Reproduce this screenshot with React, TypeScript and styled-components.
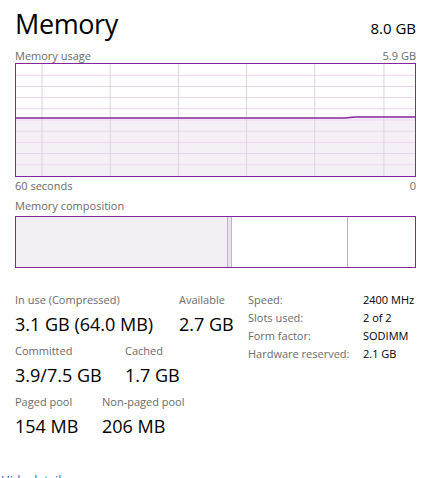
import React from "react";
import styled, { createGlobalStyle } from "styled-components";

const Global = createGlobalStyle`
  html, body { margin: 0; padding: 0; background: #fff; overflow: hidden; }
  body { font-family: "Open Sans", "Noto Sans", sans-serif; color: #000; }
`;

const Page = styled.div`
  width: 432px;
  height: 478px;
  box-sizing: border-box;
  padding: 8px 16px 0 15px;
  display: flex;
  flex-direction: column;
`;

const Header = styled.div`
  display: flex;
  justify-content: space-between;
  align-items: baseline;
  height: 40px;
`;

const Title = styled.div`
  font-size: 27px;
  line-height: 32px;
  letter-spacing: -0.4px;
`;

const Total = styled.div`
  font-size: 15px;
  line-height: 20px;
`;

const CaptionRow = styled.div<{ $h?: number }>`
  display: flex;
  justify-content: space-between;
  font-size: 11px;
  line-height: 15px;
  color: #6b6b6b;
  height: ${(p) => p.$h ?? 15}px;
`;

const GraphBox = styled.div`
  width: 401px;
  height: 114px;
  box-sizing: border-box;
  border: 1.5px solid #85269f;
  background: #fff;
`;

const GraphSvg = styled.svg`
  display: block;
  width: 100%;
  height: 100%;
`;

const CompBox = styled.div`
  width: 401px;
  height: 52px;
  box-sizing: border-box;
  border: 1.5px solid #85269f;
  display: flex;
`;

const Seg = styled.div<{ $w: number; $bg: string; $last?: boolean }>`
  width: ${(p) => p.$w}px;
  flex: ${(p) => (p.$last ? "1" : "none")};
  background: ${(p) => p.$bg};
  border-right: ${(p) => (p.$last ? "none" : "1px solid #c6acd0")};
`;

const Stats = styled.div`
  display: flex;
  align-items: flex-start;
  margin-top: 24px;
`;

const LeftStats = styled.div`
  width: 233px;
  display: flex;
  flex-direction: column;
  gap: 7px;
`;

const StatRow = styled.div`
  display: flex;
`;

const StatCol = styled.div<{ $w?: number }>`
  width: ${(p) => (p.$w ? `${p.$w}px` : "auto")};
  display: flex;
  flex-direction: column;
`;

const StatLabel = styled.div`
  font-size: 11px;
  line-height: 15px;
  color: #6b6b6b;
  height: 20px;
`;

const StatValue = styled.div`
  font-size: 18px;
  line-height: 24px;
  white-space: nowrap;
`;

const Table = styled.div`
  display: grid;
  grid-template-columns: 115px auto;
  align-content: start;
  row-gap: 3px;
  font-size: 11px;
  line-height: 15px;
`;

const TLabel = styled.div`
  color: #6b6b6b;
`;

const TValue = styled.div`
  color: #000;
`;

const Footer = styled.div`
  margin-top: auto;
  margin-left: -14px;
  font-size: 12px;
  line-height: 16px;
  color: #1a5fb4;
  height: 5px;
  overflow: visible;
`;

const W = 398;
const H = 111;

function Graph() {
  const hLines = Array.from({ length: 9 }, (_, i) => ((i + 1) * H) / 10);
  const vLines = [26, 94, 162, 230, 298, 367];
  const yLine = 53.5;
  const yLine2 = 52.5;
  const path = `M0 ${yLine} L328 ${yLine} L338 ${yLine2} L${W} ${yLine2}`;
  const fill = `${path} L${W} ${H} L0 ${H} Z`;
  return (
    <GraphSvg viewBox={`0 0 ${W} ${H}`} preserveAspectRatio="none">
      <path d={fill} fill="#f4f0f6" />
      {hLines.map((y, i) => (
        <line
          key={`h${i}`}
          x1={0}
          x2={W}
          y1={y}
          y2={y}
          stroke={i % 2 === 0 ? "#efd6ee" : "#e4d8e8"}
          strokeWidth={1}
        />
      ))}
      {vLines.map((x, i) => (
        <line key={`v${i}`} x1={x} x2={x} y1={0} y2={H} stroke="#ddd2e2" strokeWidth={1} />
      ))}
      <path d={path} fill="none" stroke="#85269f" strokeWidth={1.5} />
    </GraphSvg>
  );
}

export default function App() {
  return (
    <>
      <Global />
      <Page>
        <Header>
          <Title>Memory</Title>
          <Total>8.0 GB</Total>
        </Header>
        <CaptionRow>
          <span>Memory usage</span>
          <span>5.9 GB</span>
        </CaptionRow>
        <GraphBox>
          <Graph />
        </GraphBox>
        <CaptionRow $h={20} style={{ marginTop: 1 }}>
          <span>60 seconds</span>
          <span>0</span>
        </CaptionRow>
        <CaptionRow $h={18}>
          <span>Memory composition</span>
        </CaptionRow>
        <CompBox>
          <Seg $w={211} $bg="#f3f0f5" />
          <Seg $w={3} $bg="#ece2f0" />
          <Seg $w={115} $bg="#fff" />
          <Seg $w={0} $bg="#fff" $last />
        </CompBox>
        <Stats>
          <LeftStats>
            <StatRow>
              <StatCol $w={164}>
                <StatLabel>In use (Compressed)</StatLabel>
                <StatValue>3.1 GB (64.0 MB)</StatValue>
              </StatCol>
              <StatCol>
                <StatLabel>Available</StatLabel>
                <StatValue>2.7 GB</StatValue>
              </StatCol>
            </StatRow>
            <StatRow>
              <StatCol $w={110}>
                <StatLabel>Committed</StatLabel>
                <StatValue>3.9/7.5 GB</StatValue>
              </StatCol>
              <StatCol>
                <StatLabel>Cached</StatLabel>
                <StatValue>1.7 GB</StatValue>
              </StatCol>
            </StatRow>
            <StatRow>
              <StatCol $w={87}>
                <StatLabel>Paged pool</StatLabel>
                <StatValue>154 MB</StatValue>
              </StatCol>
              <StatCol>
                <StatLabel>Non-paged pool</StatLabel>
                <StatValue>206 MB</StatValue>
              </StatCol>
            </StatRow>
          </LeftStats>
          <Table>
            <TLabel>Speed:</TLabel>
            <TValue>2400 MHz</TValue>
            <TLabel>Slots used:</TLabel>
            <TValue>2 of 2</TValue>
            <TLabel>Form factor:</TLabel>
            <TValue>SODIMM</TValue>
            <TLabel>Hardware reserved:</TLabel>
            <TValue>2.1 GB</TValue>
          </Table>
        </Stats>
        <Footer>Hide details</Footer>
      </Page>
    </>
  );
}
